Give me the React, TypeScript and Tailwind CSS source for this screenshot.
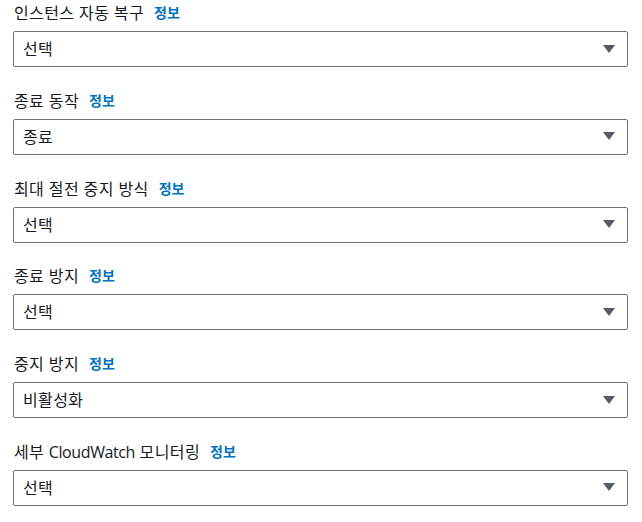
import type { ReactNode } from "react";

const fields: { label: ReactNode; value: string }[] = [
  { label: "인스턴스 자동 복구", value: "선택" },
  { label: "종료 동작", value: "종료" },
  { label: "최대 절전 중지 방식", value: "선택" },
  { label: "종료 방지", value: "선택" },
  { label: "중지 방지", value: "비활성화" },
  {
    label: (
      <>
        세부 <span className="tracking-[-0.4px]">CloudWatch</span> 모니터링
      </>
    ),
    value: "선택",
  },
];

export default function App() {
  return (
    <div
      className="flex w-[642px] h-[522px] flex-col gap-[22.8px] bg-white pl-[13px] pr-[14px] pt-[2px] text-[#16191f]"
      style={{ fontFamily: '"Open Sans", "Noto Sans CJK KR", sans-serif' }}
    >
      {fields.map((f, i) => (
        <Field key={i} label={f.label} value={f.value} />
      ))}
    </div>
  );
}

interface FieldProps {
  label: ReactNode;
  value: string;
}

function Field({ label, value }: FieldProps) {
  return (
    <div className="flex flex-col gap-[7px]">
      <div className="flex items-center gap-[10px] pl-[1px] text-[16px] leading-[22px]">
        <span className="tracking-[0.4px]">{label}</span>
        <span className="text-[14px] font-semibold text-[#0073bb]">정보</span>
      </div>
      <div className="flex h-[36px] items-center justify-between rounded-[2px] border border-[#687078] pl-[9px] pr-[12px] text-[16px] tracking-[0.4px]">
        <span>{value}</span>
        <svg width="12" height="9" viewBox="0 0 12 9">
          <path d="M0 0 H12 L6 8 Z" fill="#545b64" />
        </svg>
      </div>
    </div>
  );
}
